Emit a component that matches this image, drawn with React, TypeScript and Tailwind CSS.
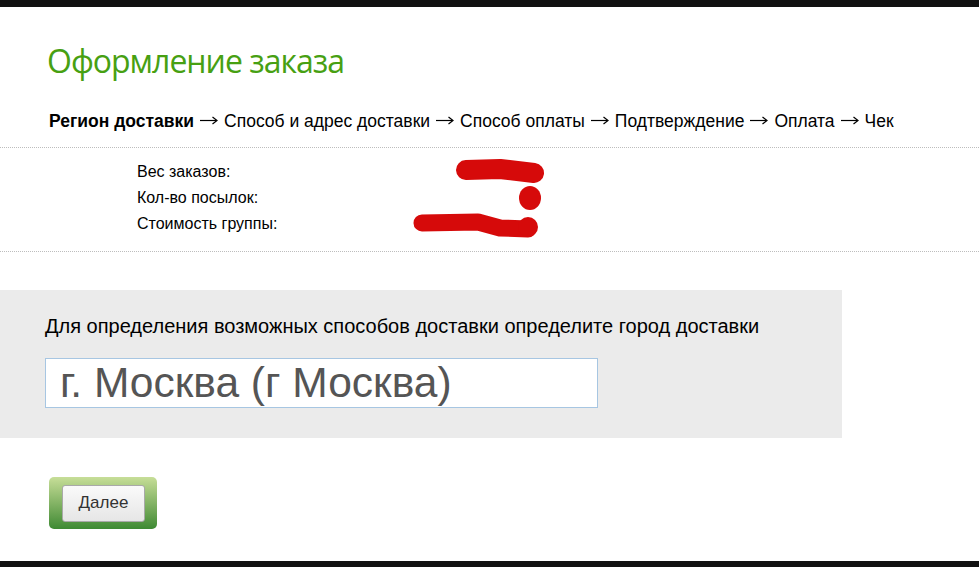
function Arrow() {
  return (
    <svg className="mx-[6px] inline-block align-[2px]" width="18" height="9" viewBox="0 0 18 9">
      <path d="M0 4.5 H16.5" stroke="#000" strokeWidth="1.2" />
      <path d="M12.5 1 L17 4.5 L12.5 8" stroke="#000" strokeWidth="1.2" fill="none" />
    </svg>
  );
}

export default function App() {
  return (
    <div className="flex h-[567px] w-[979px] flex-col overflow-hidden bg-white font-['Liberation_Sans',Arial,sans-serif] text-black">
      <div className="h-[7px] shrink-0 bg-[#111111]" />
      <h1 className="mt-[32px] h-[44px] pl-[47px] font-['Open_Sans',sans-serif] text-[32px] font-normal leading-[44px] tracking-[-1px] text-[#47a012]">
        Оформление заказа
      </h1>
      <div className="mt-[26px] h-[24px] whitespace-nowrap pl-[49px] text-[17.5px] leading-[24px]">
        <span className="font-bold">Регион доставки</span>
        <Arrow />Способ и адрес доставки<Arrow />Способ оплаты<Arrow />Подтверждение<Arrow />Оплата<Arrow />Чек
      </div>
      <div className="relative mt-[14px] border-y border-dotted border-[#bdbdbd] pb-[14px] pt-[11px] pl-[137px] text-[16px] leading-[26px]">
        <div>Вес заказов:</div>
        <div>Кол-во посылок:</div>
        <div>Стоимость группы:</div>
        <svg className="pointer-events-none absolute left-0 top-0" width="979" height="104" viewBox="0 147 979 104">
          <path d="M466 169 L500 168 L534 172" stroke="#d60a0a" strokeWidth="20" strokeLinecap="round" strokeLinejoin="round" fill="none" />
          <ellipse cx="530" cy="197" rx="11" ry="12" fill="#d60a0a" />
          <path d="M422 222 L478 221 L500 227 L528 228" stroke="#d60a0a" strokeWidth="17" strokeLinecap="round" strokeLinejoin="round" fill="none" />
          <circle cx="528" cy="226" r="10" fill="#d60a0a" />
        </svg>
      </div>
      <div className="mt-[38px] h-[148px] w-[842px] bg-[#ebebeb] pl-[45px] pt-[24px]">
        <div className="h-[24px] whitespace-nowrap text-[20px] leading-[24px]">
          Для определения возможных способов доставки определите город доставки
        </div>
        <div className="mt-[20px] flex h-[50px] w-[553px] items-center border border-[#a7c6e2] bg-white pl-[14px] text-[42.5px] leading-none text-[#555555]">
          г. Москва (г Москва)
        </div>
      </div>
      <div className="mt-[39px] pl-[49px]">
        <div className="flex h-[52px] w-[108px] items-center rounded-[5px] bg-gradient-to-b from-[#c7de98] to-[#3d8a33] pl-[13px]">
          <button className="h-[37px] w-[83px] rounded-[3px] border border-[#a9a9a9] bg-gradient-to-b from-[#fafafa] to-[#e6e6e6] text-[17px] text-[#333333]">
            Далее
          </button>
        </div>
      </div>
      <div className="flex-1" />
      <div className="h-[6px] shrink-0 bg-[#111111]" />
    </div>
  );
}
